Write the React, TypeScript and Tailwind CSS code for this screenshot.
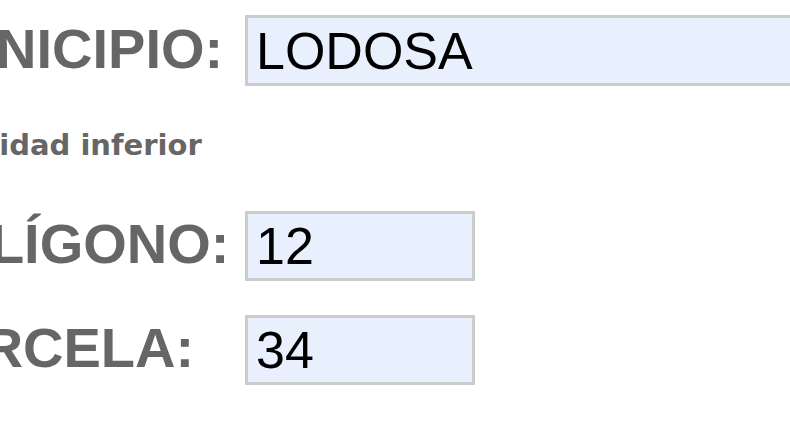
import React from 'react';

const Field = ({
  label,
  value,
  inputClass,
  rowClass,
}: {
  label: string;
  value: string;
  inputClass: string;
  rowClass: string;
}) => {
  return (
    <div className={`flex items-center ${rowClass}`}>
      <label className="w-[336px] shrink-0 mb-1 text-[56px] leading-none font-bold text-[#666666] whitespace-nowrap">
        {label}
      </label>
      <input
        readOnly
        value={value}
        className={`h-full shrink-0 border-[3px] border-[#cccccc] bg-[#e8f0fe] pl-2 text-[52px] text-black outline-none ${inputClass}`}
        style={{ fontFamily: '"Liberation Sans", Arial, sans-serif' }}
      />
    </div>
  );
};

const App = () => {
  return (
    <div
      className="w-[790px] h-[440px] overflow-hidden bg-white"
      style={{ fontFamily: '"Liberation Sans", Arial, sans-serif' }}
    >
      <div className="-ml-[91px] flex flex-col">
        <Field
          label="MUNICIPIO:"
          value="LODOSA"
          rowClass="mt-[15px] h-[71px]"
          inputClass="w-[620px]"
        />
        <div
          className="mt-[45px] ml-[49px] text-[29px] leading-none font-bold text-[#666666] whitespace-nowrap"
          style={{ fontFamily: '"DejaVu Sans", Verdana, sans-serif' }}
        >
          unidad inferior
        </div>
        <Field
          label="POLÍGONO:"
          value="12"
          rowClass="mt-[51px] h-[70px]"
          inputClass="w-[230px]"
        />
        <Field
          label="PARCELA:"
          value="34"
          rowClass="mt-[34px] h-[70px]"
          inputClass="w-[230px]"
        />
      </div>
    </div>
  );
};

export default App;
